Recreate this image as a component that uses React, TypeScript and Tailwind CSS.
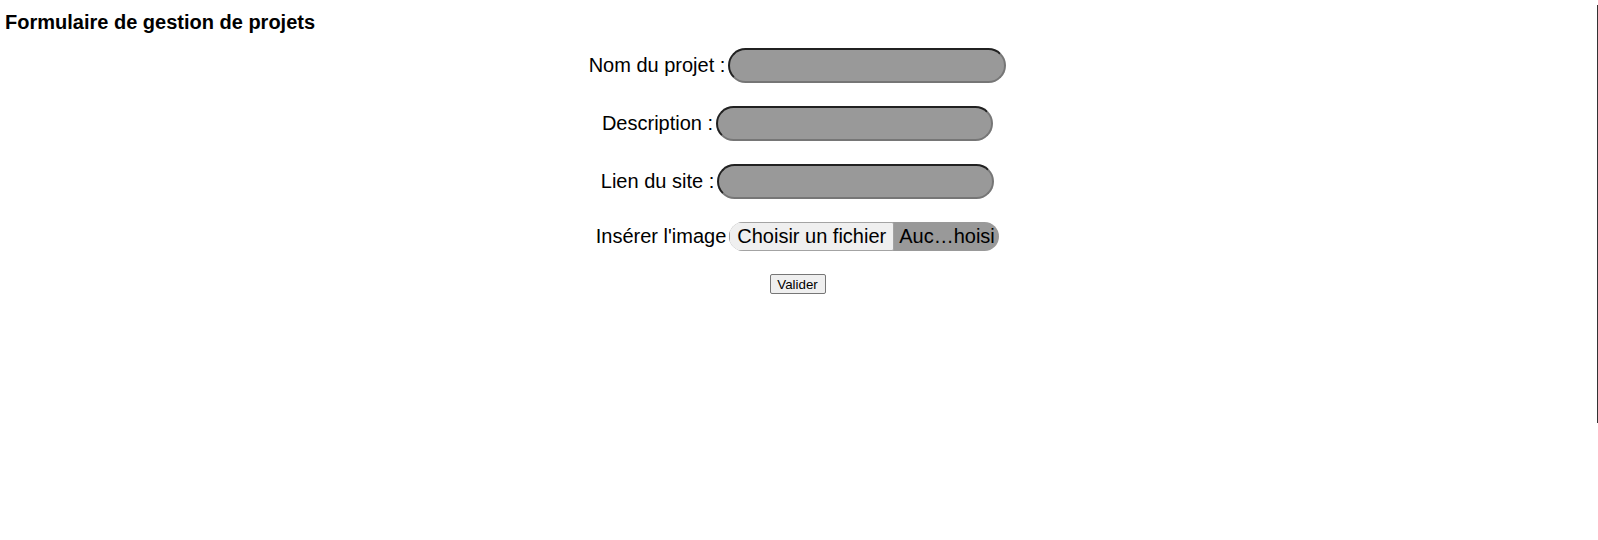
import React from "react";

const font = "font-['Liberation_Sans',Arial,sans-serif]";

function TextRow({ label, inputW }: { label: string; inputW: string }) {
  return (
    <div className="flex items-center justify-center gap-[3px]">
      <span className="text-[20px] leading-[23px] text-black whitespace-pre">{label}</span>
      <div
        className={`${inputW} h-[35px] rounded-full bg-[#999999] border-2 border-[#767676] [border-style:inset]`}
      />
    </div>
  );
}

export default function App() {
  return (
    <div className={`flex w-[1598px] min-h-[540px] bg-white ${font}`}>
      <main className="w-[1597px] flex flex-col">
        <h1 className="pl-[5px] pt-[11px] text-[20px] leading-[23px] font-bold text-black">
          Formulaire de gestion de projets
        </h1>
        <form className="mt-[14px] pr-[2px] flex flex-col gap-[23px]">
          <TextRow label="Nom du projet :" inputW="w-[278px]" />
          <TextRow label="Description :" inputW="w-[277px]" />
          <TextRow label="Lien du site :" inputW="w-[277px]" />
          <div className="flex items-center justify-center gap-[3px]">
            <span className="text-[20px] leading-[23px] text-black whitespace-pre">Insérer l'image</span>
            <div className="w-[270px] h-[29px] rounded-full bg-[#999999] overflow-hidden flex items-center">
              <span className="h-full flex items-center px-[7px] bg-[#efefef] border border-[#a3a3a3] rounded-[2px] text-[20px] leading-[23px] text-black whitespace-nowrap">
                Choisir un fichier
              </span>
              <span className="ml-[5px] text-[20px] leading-[23px] text-black whitespace-nowrap">
                Auc…hoisi
              </span>
            </div>
          </div>
          <div className="flex justify-center">
            <span className="h-[20px] w-[56px] justify-center pt-[1px] flex items-center bg-[#efefef] border border-[#767676] rounded-[2px] text-[13.33px] leading-[16px] text-black">
              Valider
            </span>
          </div>
        </form>
      </main>
      <div className="mt-[5px] h-[418px] w-px bg-[#333333]" />
    </div>
  );
}
